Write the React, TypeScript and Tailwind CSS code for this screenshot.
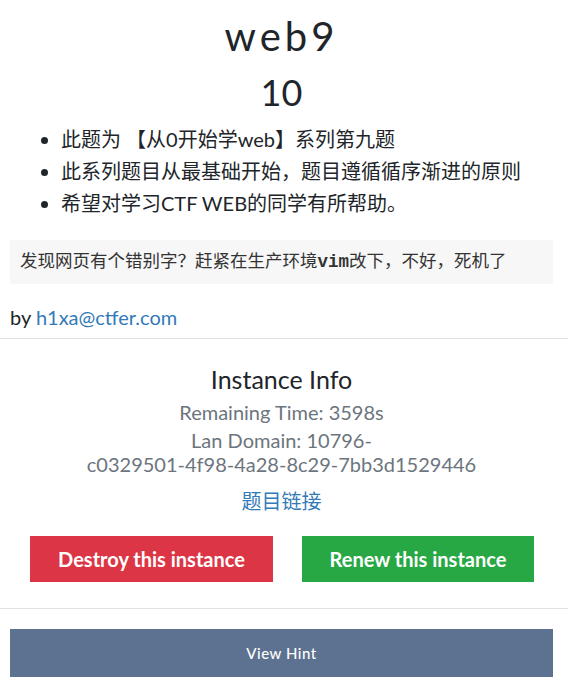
import React from "react";

// ─── Challenge modal body ─────────────────────────────────────────────────────
export default function App() {
  return (
    <div className="w-[568px] bg-white font-['Lato','Noto_Sans_CJK_SC',sans-serif] text-[#212529]">
      {/* Header */}
      <div className="pl-[10px] pr-[15px] pt-[12px] text-center">
        <h1 className="text-[40px] leading-[48px] tracking-[4px] font-normal">web9</h1>
        <h2 className="mt-[12px] text-[36px] leading-[40px] font-normal">10</h2>
      </div>

      {/* Description */}
      <div className="pl-[10px] pr-[15px]">
        <ul className="mt-[11px] list-disc pl-[51px] text-[20px] leading-[32px]">
          <li>此题为 【从0开始学web】系列第九题</li>
          <li>此系列题目从最基础开始，题目遵循循序渐进的原则</li>
          <li>希望对学习CTF WEB的同学有所帮助。</li>
        </ul>

        <pre className="mt-[21px] bg-[#f7f7f7] px-[10px] py-[10px] font-['Liberation_Mono','Noto_Sans_CJK_SC',monospace] text-[17.5px] leading-[24px] text-[#333]">
          发现网页有个错别字？赶紧在生产环境<b>vim</b>改下，不好，死机了
        </pre>

        <p className="mt-[19px] text-[20px] leading-[28px]">
          by <a className="text-[#337ab7]">h1xa@ctfer.com</a>
        </p>
      </div>

      <hr className="mt-[7px] border-[#e2e2e2]" />

      {/* Instance info */}
      <div className="pl-[10px] pr-[15px] pt-[25px] text-center">
        <h4 className="text-[25px] leading-[30px]">Instance Info</h4>
        <p className="mt-[5px] text-[20px] leading-[27px] text-[#6c757d]">Remaining Time: 3598s</p>
        <p className="mt-[2px] text-[20px] leading-[24px] text-[#6c757d]">
          Lan Domain: 10796-
          <br />
          c0329501-4f98-4a28-8c29-7bb3d1529446
        </p>
        <a className="mt-[11px] block text-[20px] leading-[28px] text-[#337ab7]">题目链接</a>

        <div className="mt-[21px] flex">
          <button className="ml-[20px] h-[46px] w-[243px] bg-[#dc3545] text-[20px] font-bold text-white">
            Destroy this instance
          </button>
          <button className="ml-[29px] h-[46px] w-[232px] bg-[#28a745] text-[20px] font-bold text-white">
            Renew this instance
          </button>
        </div>
      </div>

      <hr className="mt-[26px] border-[#e2e2e2]" />

      <div className="pl-[10px] pr-[15px] pt-[20px] pb-[16px]">
        <button className="h-[48px] w-full bg-[#5c7290] text-[15px] font-medium tracking-[0.5px] text-white">
          View Hint
        </button>
      </div>
    </div>
  );
}
